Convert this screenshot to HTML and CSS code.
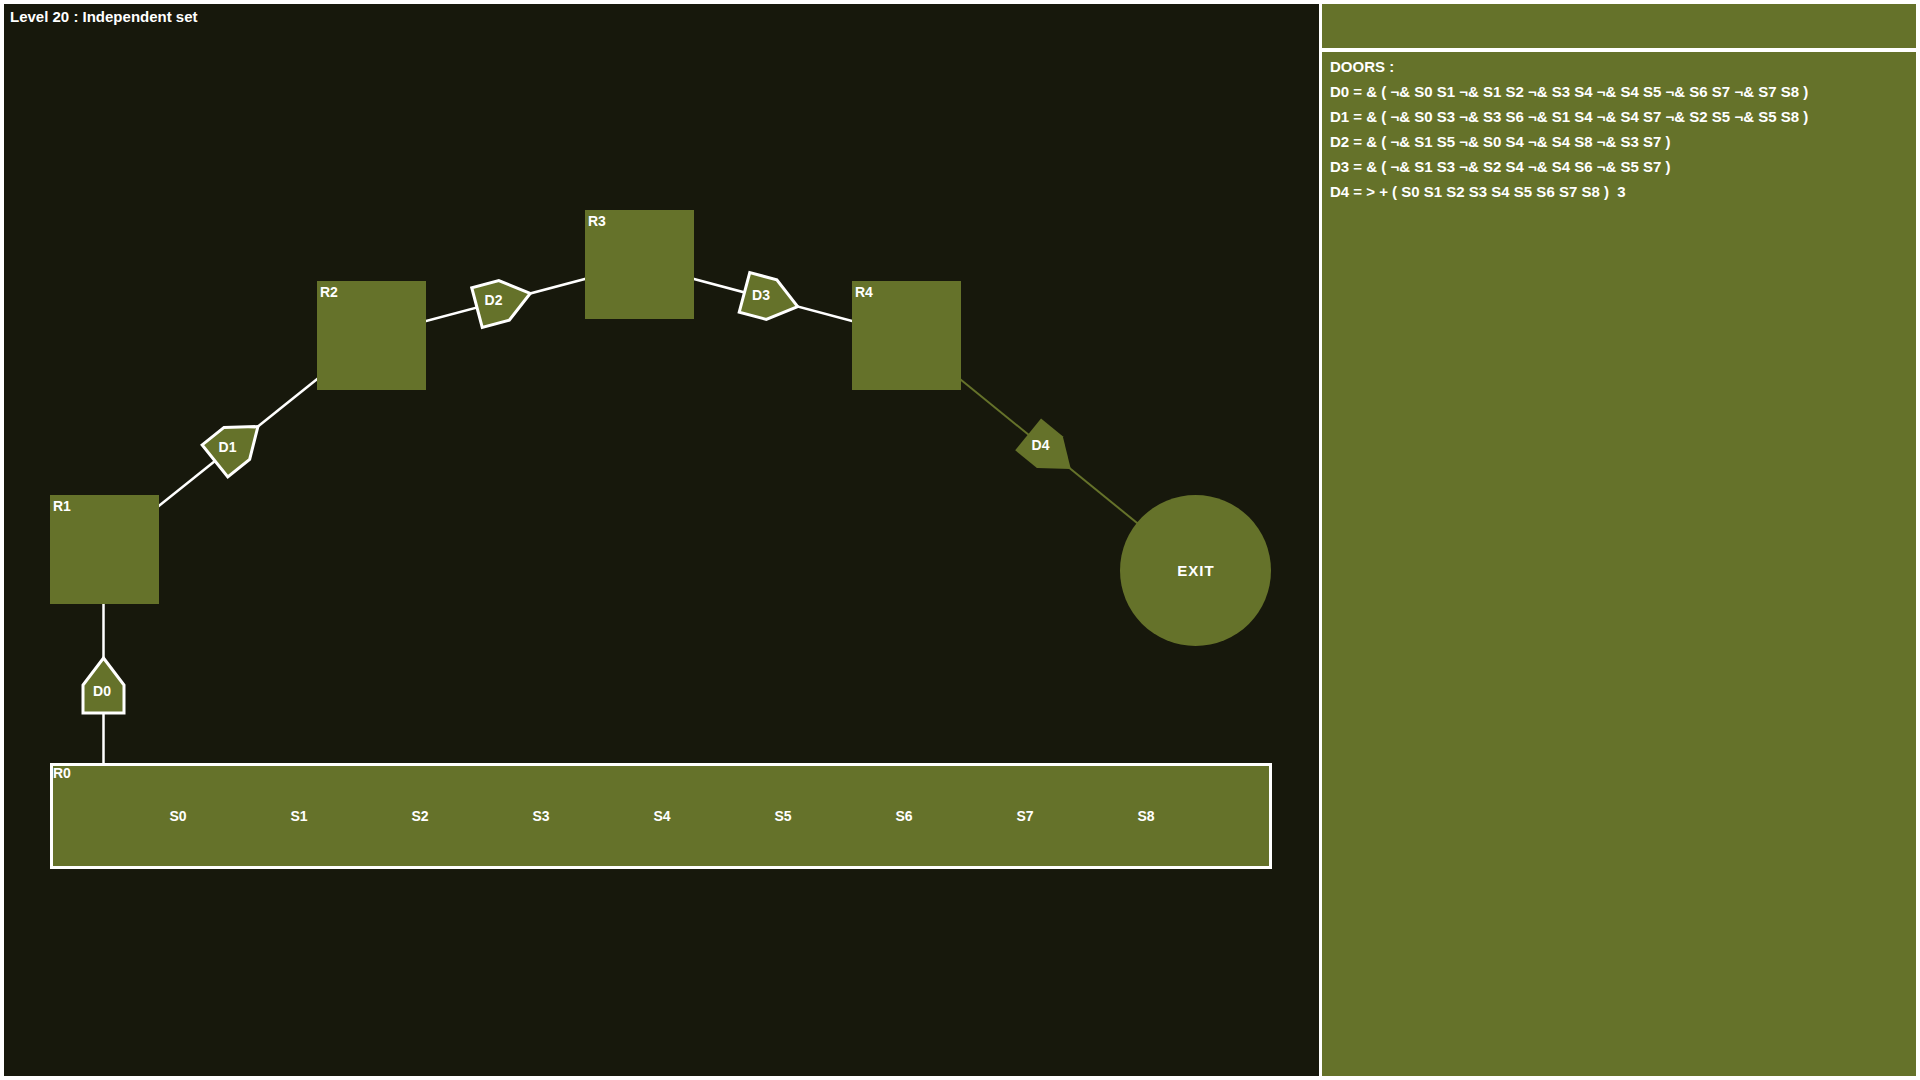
FILE: index.html
```html
<!DOCTYPE html>
<html>
<head>
<meta charset="utf-8">
<title>Level 20 : Independent set</title>
<link rel="stylesheet" href="styles.css">
</head>
<body>
<div class="app">
  <div class="canvas">
    <svg class="diagram" viewBox="4 4 1315 1072" xmlns="http://www.w3.org/2000/svg">
      <text class="title" x="10" y="22">Level 20 : Independent set</text>

      <!-- links -->
      <line class="link" x1="103.5" y1="604" x2="103.5" y2="763"/>
      <line class="link" x1="104.5" y1="549.5" x2="371.5" y2="335.5"/>
      <line class="link" x1="371.5" y1="335.5" x2="639.5" y2="264.5"/>
      <line class="link" x1="639.5" y1="264.5" x2="906.5" y2="335.5"/>
      <line class="link-locked" x1="906.5" y1="335.5" x2="1195.5" y2="570.5"/>

      <!-- rooms -->
      <rect class="room" x="50" y="495" width="109" height="109"/>
      <text class="label" x="53" y="511">R1</text>
      <rect class="room" x="317" y="281" width="109" height="109"/>
      <text class="label" x="320" y="297">R2</text>
      <rect class="room" x="585" y="210" width="109" height="109"/>
      <text class="label" x="588" y="226">R3</text>
      <rect class="room" x="852" y="281" width="109" height="109"/>
      <text class="label" x="855" y="297">R4</text>

      <rect class="room-start" x="51.5" y="764.5" width="1219" height="103"/>
      <text class="label" x="53" y="778">R0</text>
      <text class="label mid" x="178" y="821">S0</text>
      <text class="label mid" x="299" y="821">S1</text>
      <text class="label mid" x="420" y="821">S2</text>
      <text class="label mid" x="541" y="821">S3</text>
      <text class="label mid" x="662" y="821">S4</text>
      <text class="label mid" x="783" y="821">S5</text>
      <text class="label mid" x="904" y="821">S6</text>
      <text class="label mid" x="1025" y="821">S7</text>
      <text class="label mid" x="1146" y="821">S8</text>

      <circle class="room" cx="1195.5" cy="570.5" r="75.5"/>
      <text class="label exit" x="1196" y="576">EXIT</text>

      <!-- doors -->
      <polygon class="door" transform="translate(103.5 683.5) rotate(-90)" points="25.5,0 -1.5,20.5 -29.5,20.5 -29.5,-20.5 -1.5,-20.5"/>
      <text class="label mid" x="102" y="696">D0</text>
      <polygon class="door" transform="translate(238 442.5) rotate(-38.7)" points="25.5,0 -1.5,20.5 -29.5,20.5 -29.5,-20.5 -1.5,-20.5"/>
      <text class="label mid" x="227.5" y="452">D1</text>
      <polygon class="door" transform="translate(505.5 300) rotate(-14.84)" points="25.5,0 -1.5,20.5 -29.5,20.5 -29.5,-20.5 -1.5,-20.5"/>
      <text class="label mid" x="493.5" y="305">D2</text>
      <polygon class="door" transform="translate(773 300) rotate(14.89)" points="25.5,0 -1.5,20.5 -29.5,20.5 -29.5,-20.5 -1.5,-20.5"/>
      <text class="label mid" x="761" y="300">D3</text>
      <polygon class="door-locked" transform="translate(1051 453) rotate(39.11)" points="25.5,0 -1.5,20.5 -29.5,20.5 -29.5,-20.5 -1.5,-20.5"/>
      <text class="label mid" x="1040.5" y="450">D4</text>
    </svg>
  </div>
  <div class="side">
    <div class="side-top"></div>
    <div class="side-main">
      <div class="line">DOORS :</div>
      <div class="line">D0 = &amp; ( ¬&amp; S0 S1 ¬&amp; S1 S2 ¬&amp; S3 S4 ¬&amp; S4 S5 ¬&amp; S6 S7 ¬&amp; S7 S8 )</div>
      <div class="line">D1 = &amp; ( ¬&amp; S0 S3 ¬&amp; S3 S6 ¬&amp; S1 S4 ¬&amp; S4 S7 ¬&amp; S2 S5 ¬&amp; S5 S8 )</div>
      <div class="line">D2 = &amp; ( ¬&amp; S1 S5 ¬&amp; S0 S4 ¬&amp; S4 S8 ¬&amp; S3 S7 )</div>
      <div class="line">D3 = &amp; ( ¬&amp; S1 S3 ¬&amp; S2 S4 ¬&amp; S4 S6 ¬&amp; S5 S7 )</div>
      <div class="line">D4 = &gt; + ( S0 S1 S2 S3 S4 S5 S6 S7 S8 )&nbsp; 3</div>
    </div>
  </div>
</div>
</body>
</html>
```
FILE: styles.css
```css
html, body {
  margin: 0;
  padding: 0;
  background: #ffffff;
}

body {
  width: 1920px;
  height: 1080px;
  overflow: hidden;
  font-family: "Liberation Sans", Arial, sans-serif;
  font-weight: bold;
  color: #ffffff;
}

.app {
  display: flex;
  gap: 3px;
  padding: 4px;
  height: 1072px;
}

.canvas {
  width: 1315px;
  height: 1072px;
  background: #17180c;
  flex: none;
}

.diagram {
  display: block;
  width: 1315px;
  height: 1072px;
}

.title {
  font-family: "Liberation Sans", Arial, sans-serif;
  font-weight: bold;
  font-size: 15px;
  fill: #ffffff;
}

.label {
  font-family: "Liberation Sans", Arial, sans-serif;
  font-weight: bold;
  font-size: 14px;
  fill: #ffffff;
}

.mid {
  text-anchor: middle;
}

.exit {
  font-size: 15px;
  letter-spacing: 1px;
  text-anchor: middle;
}

.link {
  stroke: #ffffff;
  stroke-width: 2.5;
}

.link-locked {
  stroke: #65722a;
  stroke-width: 2;
}

.room {
  fill: #65722a;
}

.room-start {
  fill: #65722a;
  stroke: #ffffff;
  stroke-width: 3;
}

.door {
  fill: #65722a;
  stroke: #ffffff;
  stroke-width: 3;
  stroke-linejoin: miter;
}

.door-locked {
  fill: #65722a;
}

.side {
  flex: 1;
  display: flex;
  flex-direction: column;
  gap: 4px;
}

.side-top {
  height: 44px;
  background: #65722a;
}

.side-main {
  flex: 1;
  background: #65722a;
  padding: 2px 8px 0 8px;
  font-size: 15px;
  line-height: 25px;
}

.line {
  white-space: pre;
}
```
